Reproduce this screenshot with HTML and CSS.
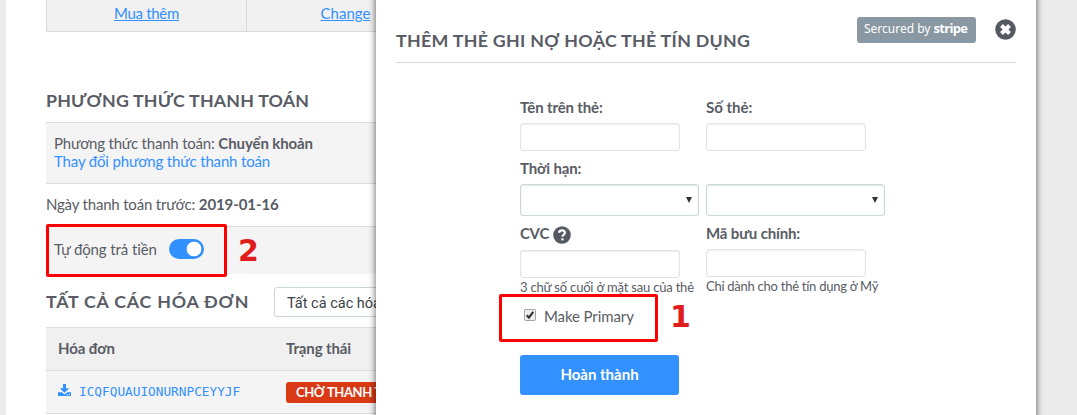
FILE: index.html
```
<!DOCTYPE html>
<html lang="vi">
<head>
<meta charset="utf-8">
<title>Phương thức thanh toán</title>
<link rel="stylesheet" href="styles.css">
</head>
<body>
<main class="page">
  <div class="quick-links">
    <div class="quick-cell"><a class="link t-buy" href="#">Mua thêm</a></div>
    <div class="quick-cell"><a class="link t-change" href="#">Change</a></div>
  </div>
  <h2 class="heading heading-method"><span class="t-method">PHƯƠNG THỨC THANH TOÁN</span></h2>
  <section class="row row-method">
    <div><span class="t-current">Phương thức thanh toán:</span> <b class="t-transfer">Chuyển khoản</b></div>
    <a class="plain-link t-edit" href="#">Thay đổi phương thức thanh toán</a>
  </section>
  <section class="row row-date"><span class="t-prev">Ngày thanh toán trước:</span>&nbsp;<b class="t-date">2019-01-16</b></section>
  <section class="row row-auto"><span class="t-auto">Tự động trả tiền</span><span class="toggle"></span></section>
  <div class="invoice-head">
    <h2 class="heading"><span class="t-invoices">TẤT CẢ CÁC HÓA ĐƠN</span></h2>
    <div class="filter"><span class="t-filter">Tất cả các hóa đơn</span></div>
  </div>
  <div class="table-row table-head"><span><span class="t-inv">Hóa đơn</span></span><span class="t-status">Trạng thái</span></div>
  <div class="table-row table-item">
    <a class="invoice" href="#">
      <svg class="download" viewBox="0 0 13 13"><path d="M5 0h3v4.3h3.2L6.5 8.7 1.8 4.3H5z"/><path d="M0 8.2h3.8l2.7 2.3 2.7-2.3H13V12H0z"/><path class="dots" d="M8.6 10.2h1v1h-1zM10.8 10.2h1v1h-1z"/></svg>
      <span class="code">ICQFQUAUIONURNPCEYYJF</span>
    </a>
    <span class="tag"><span class="t-tag">CHỜ THANH TOÁN</span></span>
  </div>
</main>

<div class="callout callout-auto"></div>
<span class="number number-two">2</span>

<section class="modal">
  <header class="modal-head">
    <h1 class="heading modal-title"><span class="t-title">THÊM THẺ GHI NỢ HOẶC THẺ TÍN DỤNG</span></h1>
    <div class="badge"><span class="t-secured">Sercured by</span><b class="t-stripe">stripe</b></div>
    <svg class="close" viewBox="0 0 21 21"><circle cx="10.5" cy="10.5" r="10.3"/><path d="M6.5 6.5l8 8M14.5 6.5l-8 8"/></svg>
  </header>
  <form class="form">
    <div class="field"><label><span class="t-name">Tên trên thẻ:</span></label><div class="input"></div></div>
    <div class="field"><label><span class="t-number">Số thẻ:</span></label><div class="input"></div></div>
    <div class="field field-expiry"><label><span class="t-expiry">Thời hạn:</span></label><div class="select"></div></div>
    <div class="field field-expiry"><label></label><div class="select"></div></div>
    <div class="field field-cvc"><label><span class="t-cvc">CVC</span><svg class="help" viewBox="0 0 18 18"><circle cx="9" cy="9" r="8.8"/><path d="M6 6.7C6.3 5.1 7.4 4.4 9 4.4c1.7 0 2.9 1 2.9 2.4 0 2-2.5 1.9-2.5 4"/><path d="M8.2 12.3h2.4v2H8.2z" class="dot"/></svg></label><div class="input"></div><small><span class="t-hint">3 chữ số cuối ở mặt sau của thẻ</span></small></div>
    <div class="field field-zip"><label><span class="t-zip">Mã bưu chính:</span></label><div class="input"></div><small><span class="t-us">Chỉ dành cho thẻ tín dụng ở Mỹ</span></small></div>
  </form>
  <div class="primary"><svg class="check" viewBox="0 0 13 13"><rect x=".5" y=".5" width="12" height="12" rx="1.5"/><path d="M3 6.8l2.4 2.6L10 3.2"/></svg><span class="t-primary">Make Primary</span></div>
  <div class="submit"><span class="t-submit">Hoàn thành</span></div>
</section>

<div class="callout callout-primary"></div>
<span class="number number-one">1</span>
</body>
</html>
```
FILE: styles.css
```
* { box-sizing: border-box; }
body {
  margin: 0;
  height: 415px;
  overflow: hidden;
  background: #ebebeb;
  color: #595c65;
  font: 15px/18px Lato, "Noto Sans", sans-serif;
}
.page { width: 1030px; height: 415px; margin-left: 6px; padding-left: 40px; background: #fff; overflow: hidden; }
b { font-weight: 700; }
span, b, a { white-space: nowrap; }

.quick-links { display: grid; grid-template-columns: 199px 201px; width: 402px; height: 32px; background: #f1f1f1; border: solid #d9d9d9; border-width: 0 1px 1px; }
.quick-cell { padding-top: 4px; text-align: center; }
.quick-cell + .quick-cell { border-left: 1px solid #d9d9d9; padding-right: 3px; }
.link { color: #3390ff; text-decoration: underline; }
.plain-link { color: #3390ff; text-decoration: none; }
.t-buy { letter-spacing: -.3px; }

.heading { margin: 0; font-size: 17.8px; line-height: 24px; font-weight: 700; color: #595c65; }
.heading-method { height: 90px; padding-top: 56px; }
.t-method { letter-spacing: .2px; }
.t-invoices { letter-spacing: .78px; }
.t-title { letter-spacing: .3px; }
.row { border-top: 1px solid #dcdcdc; }
.row-method { height: 61px; padding: 11px 8px; background: #f4f4f4; }
.row-date { display: flex; height: 43px; padding-top: 11px; }
.row-auto { display: flex; height: 48px; padding: 13px 8px; background: #f4f4f4; }
.t-current { letter-spacing: -.21px; }
.t-edit { letter-spacing: -.16px; }
.t-prev { letter-spacing: -.19px; }
.t-transfer, .t-date { letter-spacing: -.1px; }
.t-auto { letter-spacing: -.1px; }
.toggle { width: 35px; height: 20px; margin: -1px 0 0 12px; border-radius: 10px; background: radial-gradient(circle at 25px 10px, #fff 7px, #3390ff 7.7px); }
.invoice-head { display: flex; height: 53px; padding-top: 13px; }
.invoice-head .heading { width: 228px; padding-top: 2px; }
.filter { width: 170px; height: 30px; padding: 7px 12px; border: 1px solid #c9d6da; border-radius: 3px; color: #3c3f45; font-family: Roboto, sans-serif; font-size: 14.5px; }

.table-row { display: grid; grid-template-columns: 228px 1fr; height: 43px; padding-left: 12px; border-top: 1px solid #dcdcdc; }
.table-head { padding-top: 11px; background: #f0f0f0; font-weight: 700; }
.table-item { background: #f4f4f4; border-bottom: 1px solid #dcdcdc; height: 44px; padding-top: 11px; }
.t-inv, .t-status { letter-spacing: -.1px; }
.invoice { display: flex; gap: 8px; color: #3390ff; text-decoration: none; }
.download { width: 13px; height: 13px; margin-top: 2px; fill: #3390ff; }
.download .dots { fill: #fff; }
.code { font: 12.75px/20px "DejaVu Sans Mono", monospace; }
.tag { width: 132px; height: 21px; padding: 1px 10px; border-radius: 3px; background: #d93a15; color: #fff; font-size: 13px; font-weight: 700; letter-spacing: -.4px; }

.modal { position: absolute; left: 376px; top: -10px; width: 660px; height: 440px; padding: 10px 20px 0; background: #fff; box-shadow: 0 0 7px rgba(0, 0, 0, .65); }
.modal-head { display: flex; height: 63px; border-bottom: 1px solid #d9d9d9; }
.modal-title { width: 461px; padding-top: 28px; }
.badge { display: flex; gap: 3px; width: 119px; height: 26px; margin: 17px 20px 0 0; padding: 3px 7px; border-radius: 3px; background: #8a98a3; color: #fff; font: 12px/18px "Noto Sans", sans-serif; white-space: nowrap; }
.t-stripe { font: 700 13px/16px "Open Sans", "Noto Sans", sans-serif; letter-spacing: -.7px; }
.close { width: 21px; height: 21px; margin-top: 19px; margin-left: -1px; flex: none; fill: #555962; stroke: none; }
.close path { stroke: #fff; stroke-width: 4; }
.form { display: grid; grid-template-columns: 179px 179px; grid-template-rows: 61px 65px 71px; column-gap: 7px; margin: 36px 0 0 124px; }
label { display: flex; height: 24px; font-weight: 700; }
.t-name, .t-expiry, .t-zip { letter-spacing: -.15px; }
.t-cvc { letter-spacing: -.3px; }
.input { width: 160px; height: 28px; border: 1px solid #dfe3e4; border-radius: 3px; box-shadow: inset 0 1px 2px rgba(0, 0, 0, .07); }
.select { display: flex; justify-content: flex-end; width: 179px; height: 32px; padding: 12px 6px; border: 1px solid #c9d8d8; border-radius: 3px; box-shadow: inset 0 1px 2px rgba(0, 0, 0, .1); }
.select::after { content: ""; width: 6px; height: 6px; background: #333; clip-path: polygon(0 0, 100% 0, 50% 100%); }
.field label { margin-top: -1px; height: 25px; }
.field-cvc label { height: 26px; }
.help { width: 18px; height: 18px; margin: 2px 0 0 4px; fill: #555962; }
.help path { fill: none; stroke: #fff; stroke-width: 2.2; }
.help .dot { fill: #fff; stroke: none; }
small { display: block; font-size: 13px; line-height: 18px; }
.t-hint { letter-spacing: -.19px; }
.t-us { letter-spacing: -.26px; }
.primary { display: flex; gap: 8px; height: 59px; padding-top: 11px; margin-left: 128px; }
.check { width: 12px; height: 12px; margin-top: 2px; fill: #eee; stroke: #9a9a9a; }
.check path { fill: none; stroke: #333; stroke-width: 2.3; }
.t-primary { letter-spacing: -.1px; }
.submit { width: 159px; height: 40px; margin-left: 124px; padding-top: 10px; text-align: center; border-radius: 3px; background: #3390ff; color: #fff; font-weight: 700; }

.callout { position: absolute; border: 3px solid #f00; border-radius: 2px; }
.callout-auto { left: 46px; top: 224px; width: 181px; height: 53px; }
.callout-primary { left: 499px; top: 294px; width: 159px; height: 48px; }
.number { position: absolute; color: #df1d1d; font: bold 30px/30px "DejaVu Sans", sans-serif; }
.number-two { left: 238px; top: 236px; }
.number-one { left: 670px; top: 302px; }
```
